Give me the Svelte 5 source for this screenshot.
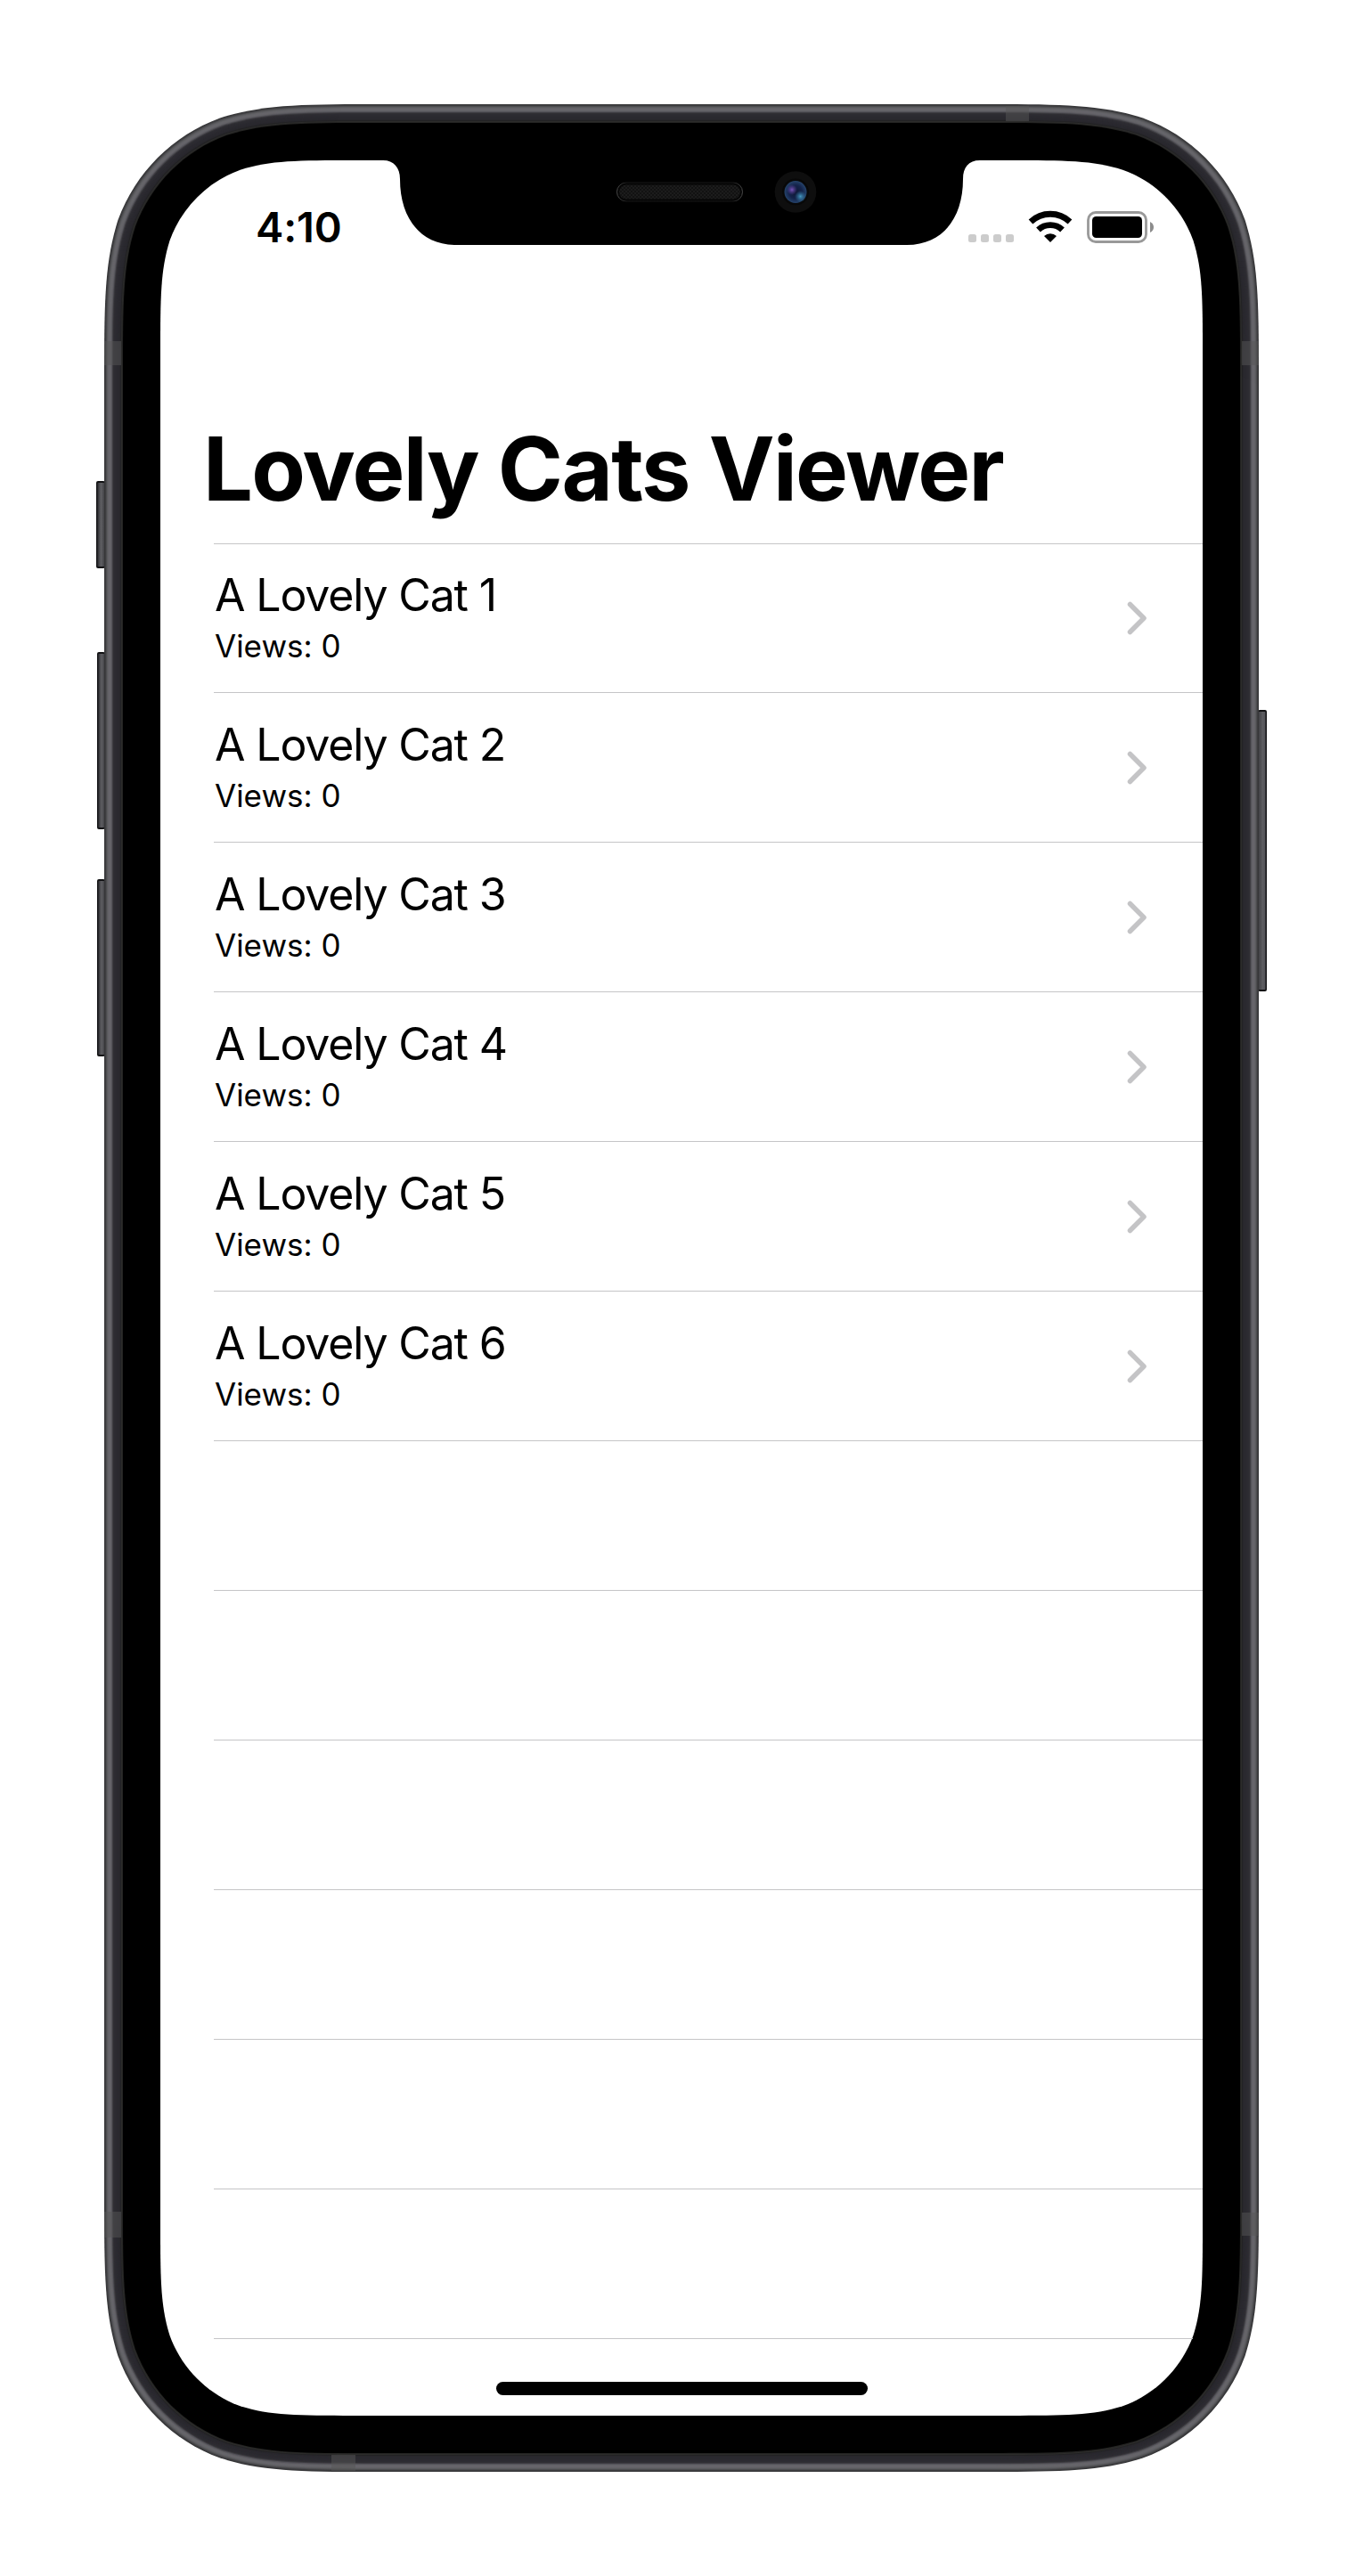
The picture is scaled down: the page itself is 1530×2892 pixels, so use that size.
<script>
  const n = (v) => v.toFixed(2);

  // Rounded rectangle with continuous-curvature corners.
  function squircle(x, y, w, h, r) {
    const X = (v) => n(x + v), Y = (v) => n(y + v);
    const a = 1.528665 * r, b = 1.08849 * r, c = 0.8684 * r, d = 0.63149 * r, e = 0.07491 * r, f = 0.37282 * r, g = 0.16906 * r;
    return [
      `M${X(a)} ${Y(0)}H${X(w - a)}`,
      `C${X(w - b)} ${Y(0)} ${X(w - c)} ${Y(0)} ${X(w - d)} ${Y(e)}`,
      `C${X(w - f)} ${Y(g)} ${X(w - g)} ${Y(f)} ${X(w - e)} ${Y(d)}`,
      `C${X(w)} ${Y(c)} ${X(w)} ${Y(b)} ${X(w)} ${Y(a)}`,
      `V${Y(h - a)}`,
      `C${X(w)} ${Y(h - b)} ${X(w)} ${Y(h - c)} ${X(w - e)} ${Y(h - d)}`,
      `C${X(w - g)} ${Y(h - f)} ${X(w - f)} ${Y(h - g)} ${X(w - d)} ${Y(h - e)}`,
      `C${X(w - c)} ${Y(h)} ${X(w - b)} ${Y(h)} ${X(w - a)} ${Y(h)}`,
      `H${X(a)}`,
      `C${X(b)} ${Y(h)} ${X(c)} ${Y(h)} ${X(d)} ${Y(h - e)}`,
      `C${X(f)} ${Y(h - g)} ${X(g)} ${Y(h - f)} ${X(e)} ${Y(h - d)}`,
      `C${X(0)} ${Y(h - c)} ${X(0)} ${Y(h - b)} ${X(0)} ${Y(h - a)}`,
      `V${Y(a)}`,
      `C${X(0)} ${Y(b)} ${X(0)} ${Y(c)} ${X(e)} ${Y(d)}`,
      `C${X(g)} ${Y(f)} ${X(f)} ${Y(g)} ${X(d)} ${Y(e)}`,
      `C${X(c)} ${Y(0)} ${X(b)} ${Y(0)} ${X(a)} ${Y(0)}Z`
    ].join('');
  }

  // One colour per pixel of the metal band, from the outside in.
  const band = ['#363638', '#3e3e40', '#4c4c4f', '#5a5a5d', '#626266', '#66656a', '#66656a', '#626166', '#55545a', '#3e3d42', '#302f34', '#2d2c32', '#2c2b31', '#2b2a30', '#2a292f', '#2a292f', '#29282e', '#28272c', '#222224', '#2c2c2b', '#232322', '#000'];
  const rings = band.map((fill, i) => ({ fill, d: squircle(117 + i, 117 + i, 1296 - 2 * i, 2658 - 2 * i, 206 - i) }));
  const screen = squircle(180, 180, 1170, 2532, 142);

  const buttons = [
    { x: 108, y: 540, w: 10, h: 98 },
    { x: 109, y: 732, w: 9, h: 199 },
    { x: 109, y: 987, w: 9, h: 199 },
    { x: 1412, y: 797, w: 10, h: 316, right: true }
  ];
  const antennas = [
    [117, 383, 19, 27], [1394, 383, 19, 27], [117, 2483, 19, 29], [1394, 2484, 19, 26],
    [1129, 119, 26, 17], [372, 2756, 27, 18]
  ];

  const cats = [1, 2, 3, 4, 5, 6].map((id) => ({ name: `A Lovely Cat ${id}`, views: 0 }));
  const blanks = [0, 1, 2, 3, 4, 5];
</script>

<div class="stage">
  <svg class="device" width="1530" height="2892" viewBox="0 0 1530 2892" aria-hidden="true">
    <defs>
      <linearGradient id="btnL"><stop offset="0" stop-color="#1d1d20" /><stop offset=".25" stop-color="#47474b" /><stop offset=".5" stop-color="#5e5e62" /><stop offset="1" stop-color="#3c3c40" /></linearGradient>
      <linearGradient id="btnR"><stop offset="0" stop-color="#3c3c40" /><stop offset=".6" stop-color="#5e5e62" /><stop offset=".85" stop-color="#55555a" /><stop offset="1" stop-color="#1d1d20" /></linearGradient>
      <pattern id="mesh" width="4" height="4" patternUnits="userSpaceOnUse"><rect width="4" height="4" fill="#121212" /><rect width="2" height="2" fill="#1c1c1c" /><rect x="2" y="2" width="2" height="2" fill="#1c1c1c" /></pattern>
      <linearGradient id="rim"><stop offset="0" stop-color="#4a4a4a" /><stop offset=".08" stop-color="#161616" /><stop offset=".92" stop-color="#161616" /><stop offset="1" stop-color="#4a4a4a" /></linearGradient>
      <radialGradient id="lens"><stop offset="0" stop-color="#0e1634" /><stop offset=".6" stop-color="#14234a" /><stop offset="1" stop-color="#25436b" /></radialGradient>
      <radialGradient id="violet"><stop offset="0" stop-color="#7753b8" /><stop offset="1" stop-color="#5a3f98" stop-opacity="0" /></radialGradient>
      <radialGradient id="cyan"><stop offset="0" stop-color="#4597bd" /><stop offset="1" stop-color="#2f76a0" stop-opacity="0" /></radialGradient>
    </defs>
    {#each buttons as b}
      <rect x={b.x} y={b.y} width={b.w} height={b.h} rx="2" fill="#121214" />
      <rect x={b.right ? b.x : b.x + 1} y={b.y + 2} width={b.w - 1} height={b.h - 4} rx="1" fill={b.right ? 'url(#btnR)' : 'url(#btnL)'} />
    {/each}
    {#each rings as ring}
      <path d={ring.d} fill={ring.fill} />
    {/each}
    {#each antennas as [x, y, w, h]}
      <rect {x} {y} width={w} height={h} fill="#565656" opacity=".5" />
    {/each}
    <path d={screen} fill="#fff" />
    <path fill="#000" d="M430 178V180C442 180 449 188 449 201C449 245 472 275 512 275H1018C1058 275 1081 245 1081 201C1081 188 1087 180 1100 180V178Z" />
    <rect x="692.5" y="205" width="141" height="21" rx="10.500" fill="#050505" stroke="url(#rim)" />
    <rect x="695" y="207.500" width="136" height="16" rx="8" fill="url(#mesh)" />
    <circle cx="893" cy="215.500" r="23.300" fill="#0e0e0e" />
    <circle cx="893" cy="215.500" r="15" fill="#080808" />
    <circle cx="893" cy="215.500" r="12.500" fill="url(#lens)" />
    <circle cx="889" cy="213" r="6" fill="url(#violet)" />
    <circle cx="898.5" cy="220.500" r="6.500" fill="url(#cyan)" />
  </svg>

  <main>
    <header class="status">
      <span class="time">4:10</span>
      <svg class="signals" width="210" height="38" viewBox="0 0 210 38" aria-hidden="true">
        <g fill="#ccc">
          <rect x="2" y="27" width="9" height="9" rx="2.500" /><rect x="16" y="27" width="9" height="9" rx="2.500" /><rect x="30" y="27" width="9" height="9" rx="2.500" /><rect x="44" y="27" width="9" height="9" rx="2.500" />
        </g>
        <g fill="none" stroke="#000" stroke-width="6.800">
          <path d="M72 13A32 32 0 0 1 116 13" /><path d="M80.500 22A19.500 19.500 0 0 1 107.500 22" />
        </g>
        <path d="M94 36L87 28.900A10.500 10.500 0 0 1 101 28.900Z" />
        <rect x="136.500" y="2.500" width="65" height="33" rx="8.500" fill="none" stroke="#999" stroke-width="2.800" />
        <rect x="141" y="7" width="56" height="24" rx="4.500" />
        <path fill="#8c8c8c" d="M206 13Q210 15 210 19Q210 23 206 25Z" />
      </svg>
    </header>
    <h1>Lovely Cats Viewer</h1>
    <ul>
      {#each cats as cat}
        <li>
          <div>
            <p class="name">{cat.name}</p>
            <p class="views">Views: {cat.views}</p>
          </div>
          <svg width="24" height="38" viewBox="0 0 24 38" aria-hidden="true"><path d="M3.500 3.500L19 19L3.500 34.500" /></svg>
        </li>
      {/each}
      {#each blanks as blank (blank)}
        <li></li>
      {/each}
    </ul>
    <div class="home"></div>
  </main>
</div>

<style>
  :global(body) { margin: 0; background: #fff; }
  .stage { position: relative; width: 1530px; height: 2892px; box-sizing: border-box; padding: 180px; overflow: hidden; font-family: Inter, sans-serif; color: #000; }
  .device { position: absolute; inset: 0; display: block; }
  main { position: relative; width: 1170px; height: 2532px; display: flex; flex-direction: column; }
  .status { height: 298px; box-sizing: border-box; padding: 54px 55px 0 107px; display: flex; justify-content: space-between; align-items: flex-start; }
  .signals { margin-top: 2px; }
  .time { font-size: 47px; font-weight: 600; line-height: 42px; letter-spacing: -0.1px; }
  h1 { margin: 0 0 0 48px; height: 132px; line-height: 96px; font-size: 99px; font-weight: 700; letter-spacing: -1.65px; white-space: nowrap; }
  ul { list-style: none; margin: 0 0 0 60px; padding: 0; border-top: 1px solid #c5c5c7; flex: none; }
  li { height: 168px; box-sizing: border-box; border-bottom: 1px solid #c5c5c7; padding: 2px 61px 0 1px; display: flex; align-items: center; justify-content: space-between; }
  li:first-child { margin-top: -1px; }
  li:last-child { margin-right: 11px; }
  li svg { margin-bottom: 2px; }
  p { margin: 0; white-space: nowrap; }
  .name { font-size: 50px; line-height: 61px; letter-spacing: -1.15px; }
  .views { font-size: 35px; line-height: 53px; }
  li svg path { fill: none; stroke: #c4c4c6; stroke-width: 5.500; stroke-linecap: round; stroke-linejoin: round; }
  .home { position: absolute; left: 377px; bottom: 23px; width: 417px; height: 15px; border-radius: 8px; background: #000; }
</style>
